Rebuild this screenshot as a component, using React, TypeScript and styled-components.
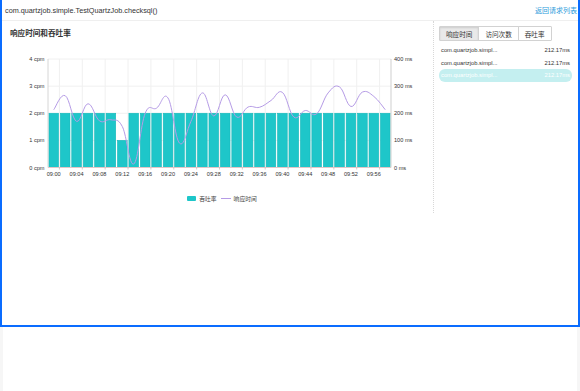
import React from "react";
import styled, { createGlobalStyle } from "styled-components";

const Global = createGlobalStyle`
  html, body { margin: 0; padding: 0; background: #fff; }
  body { font-family: "Liberation Sans", Arial, "Noto Sans CJK SC", sans-serif; color: #333; }
  * { box-sizing: border-box; }
`;

const Page = styled.div`
  width: 580px;
  height: 391px;
  display: flex;
  flex-direction: column;
  background: #fff;
`;

const Frame = styled.div`
  width: 580px;
  height: 327px;
  border: 2px solid #0a6cff;
  border-top: none;
  display: flex;
  flex-direction: column;
  background: #fff;
`;

const Header = styled.div`
  height: 21px;
  border-bottom: 1px solid #efefef;
  display: flex;
  align-items: center;
  justify-content: space-between;
  padding: 0 1px 0 3px;
`;

const Title = styled.div`
  font-size: 7.25px;
  color: #333;
`;

const BackLink = styled.a`
  font-size: 7px;
  color: #2d9cdb;
  text-decoration: none;
`;

const Body = styled.div`
  display: flex;
  flex-direction: row;
`;

const LeftPanel = styled.div`
  width: 431px;
  display: flex;
  flex-direction: column;
  padding-top: 8px;
`;

const PanelTitle = styled.div`
  font-size: 7.6px;
  font-weight: 600;
  color: #333;
  padding-left: 8px;
  line-height: 10px;
  height: 10px;
`;

const ChartSvg = styled.svg`
  display: block;
  margin-top: 5px;
`;

const Legend = styled.div`
  display: flex;
  justify-content: center;
  align-items: center;
  gap: 4px;
  height: 10px;
  margin-top: 3px;
  padding-left: 9px;
  font-size: 5.8px;
  color: #444;
`;

const LegendItem = styled.div`
  display: flex;
  align-items: center;
  gap: 3px;
`;

const Swatch = styled.span<{ $line?: boolean }>`
  display: inline-block;
  width: ${(p) => (p.$line ? "10px" : "9px")};
  height: ${(p) => (p.$line ? "1px" : "5px")};
  background: ${(p) => (p.$line ? "#b59be6" : "#1ec6c9")};
  border-radius: ${(p) => (p.$line ? "0" : "1px")};
`;

const RightPanel = styled.div`
  flex: 1;
  height: 192px;
  border-left: 1px dotted #d8d8d8;
  padding: 5px 6px 0 5px;
  display: flex;
  flex-direction: column;
`;

const Tabs = styled.div`
  display: flex;
  height: 15px;
`;

const Tab = styled.div<{ $active?: boolean }>`
  height: 15px;
  padding: 0 6px;
  display: flex;
  align-items: center;
  font-size: 6.6px;
  color: #333;
  border: 1px solid #d2d2d2;
  margin-left: -1px;
  background: ${(p) => (p.$active ? "#e9e9e9" : "#fff")};
  box-shadow: ${(p) => (p.$active ? "inset 0 1px 2px rgba(0,0,0,0.12)" : "none")};
  &:first-child { margin-left: 0; border-radius: 1px 0 0 1px; }
  &:last-child { border-radius: 0 1px 1px 0; }
`;

const List = styled.div`
  display: flex;
  flex-direction: column;
  margin-top: 3px;
`;

const Row = styled.div<{ $active?: boolean }>`
  height: 12.5px;
  display: flex;
  align-items: center;
  justify-content: space-between;
  padding: 0 2px 0 2px;
  font-size: 5.8px;
  color: ${(p) => (p.$active ? "#fff" : "#333")};
  background: ${(p) => (p.$active ? "#c4eff0" : "transparent")};
  border-radius: 6px;
`;

const Below = styled.div`
  flex: 1;
  display: flex;
  justify-content: space-between;
`;

const EdgeStrip = styled.div`
  width: 3px;
  background: #f6f6f6;
`;

// ---------- chart data ----------
const X0 = 48;
const X1 = 391;
const YTOP = 59;
const YBOT = 167.5;
const N = 30;
const W = (X1 - X0) / N;

const bars = Array.from({ length: N }, (_, i) => (i === 6 ? 1 : 2));
const ms = [
  213, 265, 170, 235, 172, 176, 151, 13, 200, 219, 256, 90, 170, 275, 190,
  268, 186, 223, 222, 247, 277, 186, 210, 198, 275, 297, 225, 278, 262, 213,
];

const yCpm = (v: number) => YBOT - (v / 4) * (YBOT - YTOP);
const yMs = (v: number) => YBOT - (v / 400) * (YBOT - YTOP);
const cx = (i: number) => X0 + (i + 0.5) * W;

function smoothPath(pts: [number, number][]) {
  const k = 0.2;
  let d = `M${pts[0][0].toFixed(2)},${pts[0][1].toFixed(2)}`;
  for (let i = 0; i < pts.length - 1; i++) {
    const p0 = pts[i - 1] || pts[i];
    const p1 = pts[i];
    const p2 = pts[i + 1];
    const p3 = pts[i + 2] || p2;
    const c1x = p1[0] + (p2[0] - p0[0]) * k;
    const c1y = p1[1] + (p2[1] - p0[1]) * k;
    const c2x = p2[0] - (p3[0] - p1[0]) * k;
    const c2y = p2[1] - (p3[1] - p1[1]) * k;
    d += ` C${c1x.toFixed(2)},${c1y.toFixed(2)} ${c2x.toFixed(2)},${c2y.toFixed(2)} ${p2[0].toFixed(2)},${p2[1].toFixed(2)}`;
  }
  return d;
}

const labels = Array.from({ length: 15 }, (_, k) => {
  const m = k * 4;
  return `09:${m.toString().padStart(2, "0")}`;
});

const Chart: React.FC = () => {
  const linePts: [number, number][] = ms.map((v, i) => [cx(i), yMs(v)]);
  const bw = W - 1.8;
  return (
    <ChartSvg width={431} height={146} viewBox="2 44 431 146">
      {[4, 3, 2, 1].map((v) => (
        <line key={v} x1={X0} x2={X1} y1={yCpm(v)} y2={yCpm(v)} stroke="#f0f0f0" strokeWidth={1} />
      ))}
      {Array.from({ length: 15 }, (_, k) => {
        const x = X0 + (2 * k + 1) * W;
        return <line key={k} x1={x} x2={x} y1={YTOP} y2={YBOT} stroke="#f0f0f0" strokeWidth={1} />;
      })}
      {bars.map((v, i) => {
        const top = yCpm(v);
        return (
          <rect
            key={i}
            x={cx(i) - bw / 2}
            y={top}
            width={bw}
            height={YBOT - top}
            fill="#1ec6c9"
            stroke="#14b8ba"
            strokeWidth={0.6}
          />
        );
      })}
      <line x1={X0} x2={X0} y1={YTOP} y2={YBOT} stroke="#d6d6d6" strokeWidth={1} />
      <line x1={X1} x2={X1} y1={YTOP} y2={YBOT} stroke="#cfcfcf" strokeWidth={1} />
      <line x1={X0} x2={X1} y1={YBOT} y2={YBOT} stroke="#e3c7c7" strokeWidth={1} />
      {Array.from({ length: 15 }, (_, k) => {
        const x = X0 + (2 * k + 1) * W;
        return <line key={k} x1={x} x2={x} y1={YBOT} y2={YBOT + 2} stroke="#c9b0b0" strokeWidth={0.7} />;
      })}
      <path d={smoothPath(linePts)} fill="none" stroke="#b59be6" strokeWidth={1} />
      {[4, 3, 2, 1, 0].map((v) => (
        <text key={v} x={44.5} y={yCpm(v) + 2} fontSize={5.6} fill="#333" textAnchor="end" fontFamily="Liberation Sans, Arial, sans-serif">
          {v} cpm
        </text>
      ))}
      {[400, 300, 200, 100, 0].map((v) => (
        <text key={v} x={394} y={yMs(v) + 2} fontSize={5.6} fill="#333" fontFamily="Liberation Sans, Arial, sans-serif">
          {v} ms
        </text>
      ))}
      {labels.map((l, k) => (
        <text key={l} x={cx(2 * k)} y={175.5} fontSize={5.6} fill="#333" textAnchor="middle" fontFamily="Liberation Sans, Arial, sans-serif">
          {l}
        </text>
      ))}
    </ChartSvg>
  );
};

const rows = [
  { name: "com.quartzjob.simpl...", t: "212.17ms" },
  { name: "com.quartzjob.simpl...", t: "212.17ms" },
  { name: "com.quartzjob.simpl...", t: "212.17ms", active: true },
];

export default function App() {
  return (
    <>
      <Global />
      <Page>
        <Frame>
          <Header>
            <Title>com.quartzjob.simple.TestQuartzJob.checksql()</Title>
            <BackLink>返回请求列表</BackLink>
          </Header>
          <Body>
            <LeftPanel>
              <PanelTitle>响应时间和吞吐率</PanelTitle>
              <Chart />
              <Legend>
                <LegendItem>
                  <Swatch />
                  <span>吞吐率</span>
                </LegendItem>
                <LegendItem>
                  <Swatch $line />
                  <span>响应时间</span>
                </LegendItem>
              </Legend>
            </LeftPanel>
            <RightPanel>
              <Tabs>
                <Tab $active>响应时间</Tab>
                <Tab>访问次数</Tab>
                <Tab>吞吐率</Tab>
              </Tabs>
              <List>
                {rows.map((r, i) => (
                  <Row key={i} $active={r.active}>
                    <span>{r.name}</span>
                    <span>{r.t}</span>
                  </Row>
                ))}
              </List>
            </RightPanel>
          </Body>
        </Frame>
        <Below>
          <EdgeStrip />
          <EdgeStrip />
        </Below>
      </Page>
    </>
  );
}
